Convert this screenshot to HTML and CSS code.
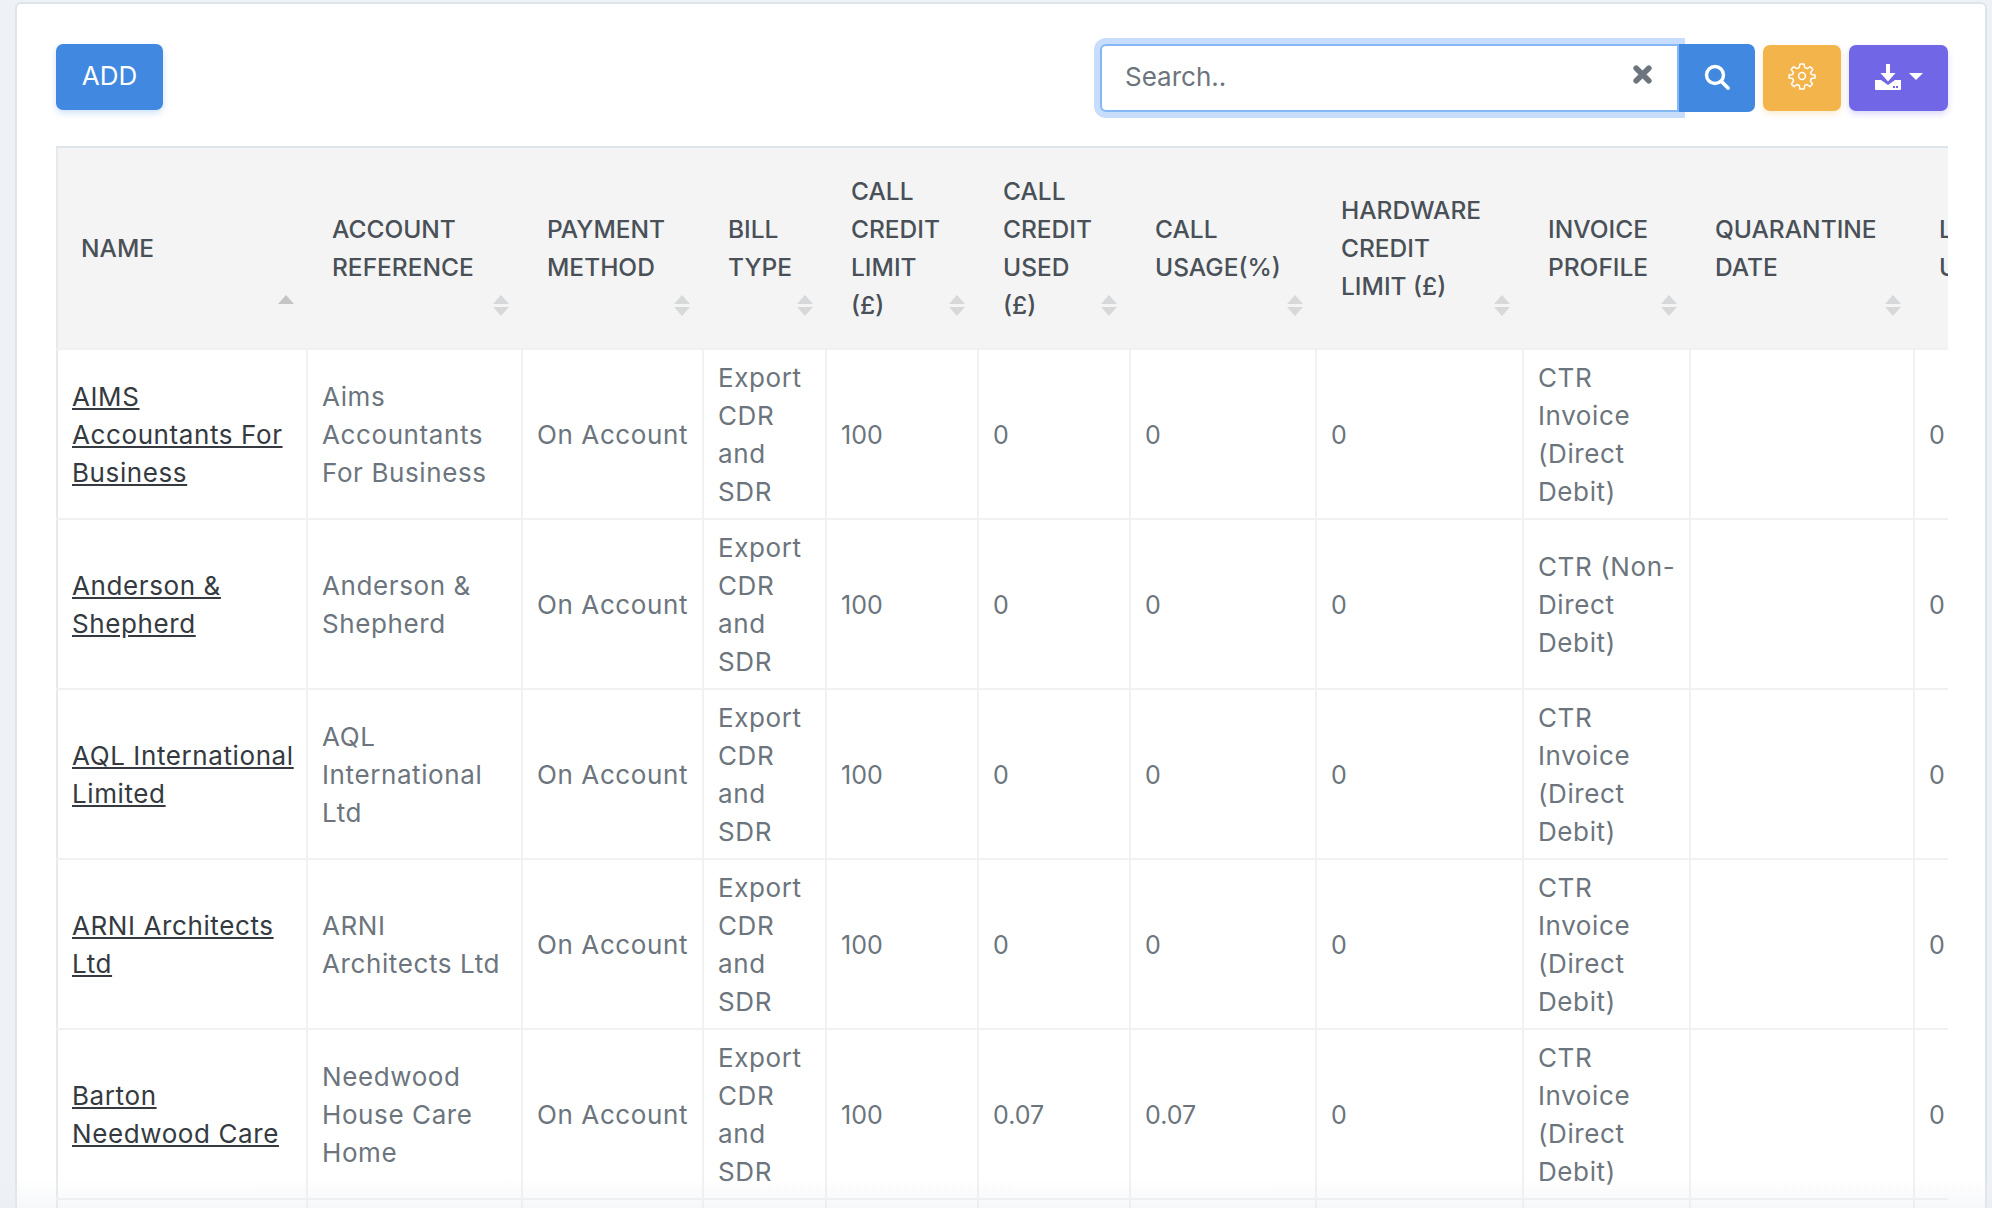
FILE: index.html
```html
<!DOCTYPE html>
<html lang="en">
  <head>
    <meta charset="UTF-8">
    <meta name="viewport" content="width=device-width, initial-scale=1.0">
    <title>Accounts</title>
    <link rel="stylesheet" href="styles.css">
  </head>
  <body>
    <div class="card">
      <div class="toolbar">
        <button class="btn btn-add">ADD</button>
        <div class="tools">
          <div class="search">
            <span class="search-text">Search..</span>
            <svg class="search-clear" viewBox="0 0 20 20"><path d="M4 4 L16 16 M16 4 L4 16" stroke="#6c757d" stroke-width="5.4" stroke-linecap="round"/></svg>
          </div>
          <button class="btn btn-search">
            <svg viewBox="0 0 28 28" width="28" height="28"><circle cx="12" cy="12" r="8.5" fill="none" stroke="#fff" stroke-width="3.4"/><path d="M18.5 18.5 L25 25" stroke="#fff" stroke-width="3.8" stroke-linecap="round"/></svg>
          </button>
          <button class="btn btn-gear">
            <svg viewBox="0 0 28 28" width="28" height="28" fill="none" stroke="#fff" stroke-width="1.5" stroke-linejoin="round"><circle cx="14" cy="14" r="3.4"/><path d="M12 2 H16 L16.8 5.6 L19.2 6.6 L22.4 4.7 L24.9 7.6 L22.6 10.4 L23.3 12.6 L27 13 V16 L23.3 16.6 L22.4 19 L24.6 22 L21.9 24.6 L19 22.5 L16.8 23.4 L16 27 H12 L11.2 23.4 L8.9 22.5 L6 24.6 L3.4 22 L5.6 19 L4.7 16.6 L1 16 V13 L4.7 12.6 L5.4 10.4 L3.1 7.6 L5.6 4.7 L8.8 6.6 L11.2 5.6 Z"/></svg>
          </button>
          <button class="btn btn-export">
            <svg viewBox="0 0 28 28" width="28" height="28"><path d="M12 1 H16 V10 H21.5 L14 18.5 L6.5 10 H12 Z" fill="#fff"/><path d="M1 17 H7 L14 22 L21 17 H27 V26 A1 1 0 0 1 26 27 H2 A1 1 0 0 1 1 26 Z" fill="#fff"/><rect x="19" y="23" width="2" height="2" fill="#7066e6"/><rect x="22" y="23" width="2" height="2" fill="#7066e6"/></svg>
            <span class="caret"></span>
          </button>
        </div>
      </div>

      <div class="table-wrap">
        <table class="accounts">
          <colgroup>
            <col class="c1"><col class="c2"><col class="c3"><col class="c4"><col class="c5"><col class="c6"><col class="c7"><col class="c8"><col class="c9"><col class="c10"><col class="c11">
          </colgroup>
          <thead>
            <tr>
              <th class="sort-asc">NAME</th>
              <th class="sort">ACCOUNT<br>REFERENCE</th>
              <th class="sort">PAYMENT<br>METHOD</th>
              <th class="sort">BILL<br>TYPE</th>
              <th class="sort">CALL<br>CREDIT<br>LIMIT<br>(£)</th>
              <th class="sort">CALL<br>CREDIT<br>USED<br>(£)</th>
              <th class="sort">CALL<br>USAGE(%)</th>
              <th class="sort">HARDWARE<br>CREDIT<br>LIMIT (£)</th>
              <th class="sort">INVOICE<br>PROFILE</th>
              <th class="sort">QUARANTINE<br>DATE</th>
              <th>LAST<br>USED</th>
            </tr>
          </thead>
          <tbody>
            <tr>
              <td class="name"><a href="#">AIMS <br>Accountants For <br>Business</a></td>
              <td>Aims<br>Accountants<br>For Business</td>
              <td>On Account</td>
              <td>Export<br>CDR<br>and<br>SDR</td>
              <td class="num">100</td><td class="num">0</td><td class="num">0</td><td class="num">0</td>
              <td>CTR<br>Invoice<br>(Direct<br>Debit)</td>
              <td></td><td class="num">0</td>
            </tr>
            <tr>
              <td class="name"><a href="#">Anderson &amp; <br>Shepherd</a></td>
              <td>Anderson &amp;<br>Shepherd</td>
              <td>On Account</td>
              <td>Export<br>CDR<br>and<br>SDR</td>
              <td class="num">100</td><td class="num">0</td><td class="num">0</td><td class="num">0</td>
              <td>CTR (Non-<br>Direct<br>Debit)</td>
              <td></td><td class="num">0</td>
            </tr>
            <tr>
              <td class="name"><a href="#">AQL International <br>Limited</a></td>
              <td>AQL<br>International<br>Ltd</td>
              <td>On Account</td>
              <td>Export<br>CDR<br>and<br>SDR</td>
              <td class="num">100</td><td class="num">0</td><td class="num">0</td><td class="num">0</td>
              <td>CTR<br>Invoice<br>(Direct<br>Debit)</td>
              <td></td><td class="num">0</td>
            </tr>
            <tr>
              <td class="name"><a href="#">ARNI Architects <br>Ltd</a></td>
              <td>ARNI<br>Architects Ltd</td>
              <td>On Account</td>
              <td>Export<br>CDR<br>and<br>SDR</td>
              <td class="num">100</td><td class="num">0</td><td class="num">0</td><td class="num">0</td>
              <td>CTR<br>Invoice<br>(Direct<br>Debit)</td>
              <td></td><td class="num">0</td>
            </tr>
            <tr>
              <td class="name"><a href="#">Barton <br>Needwood Care</a></td>
              <td>Needwood<br>House Care<br>Home</td>
              <td>On Account</td>
              <td>Export<br>CDR<br>and<br>SDR</td>
              <td class="num">100</td><td class="num">0.07</td><td class="num">0.07</td><td class="num">0</td>
              <td>CTR<br>Invoice<br>(Direct<br>Debit)</td>
              <td></td><td class="num">0</td>
            </tr>
            <tr class="cut-row">
              <td></td><td></td><td></td><td></td><td></td><td></td><td></td><td></td><td></td><td></td><td></td>
            </tr>
          </tbody>
        </table>
      </div>
    </div>
    <div class="bottom-fade"></div>
  </body>
</html>
```

FILE: styles.css
```css
body {
  position: relative;
  margin: 0;
  height: 1208px;
  overflow: hidden;
  background-color: #eef2f6;
  font-family: "Inter", "Open Sans", sans-serif;
  font-size: 26px;
  line-height: 38px;
  letter-spacing: 0.6px;
  color: #6c757d;
}

.card {
  margin: 2px 5px 0 15px;
  height: 1300px;
  padding: 40px 37px 0 39px;
  background-color: #fff;
  border: 2px solid #dee5ea;
  border-radius: 6px;
  box-sizing: border-box;
}

.toolbar {
  display: flex;
  justify-content: space-between;
  align-items: flex-start;
}

.tools {
  display: flex;
  align-items: center;
}

.btn {
  display: flex;
  align-items: center;
  justify-content: center;
  border: 0;
  padding: 0 0 3px;
  color: #fff;
  font-family: inherit;
  font-size: 26px;
  border-radius: 7px;
}

.btn-add {
  width: 107px;
  height: 66px;
  background-color: #4189e0;
  box-shadow: 0 3px 6px rgba(65, 137, 224, 0.25);
}

.search {
  display: flex;
  align-items: center;
  justify-content: space-between;
  width: 579px;
  height: 68px;
  padding: 0 26px 2px 23px;
  box-sizing: border-box;
  background-color: #fff;
  border: 2px solid #85b7f5;
  border-radius: 6px 0 0 6px;
  box-shadow: 0 0 0 6px #c8dcfb;
  letter-spacing: 0;
}

.search-text {
  color: #6c757d;
}

.search-clear {
  width: 21px;
  height: 21px;
  margin: -5px -2px 0 0;
}

.btn-search {
  position: relative;
  width: 76px;
  height: 68px;
  background-color: #4189e0;
  border-radius: 0 7px 7px 0;
}

.btn-gear {
  width: 78px;
  height: 66px;
  margin-left: 8px;
  padding-bottom: 4px;
  background-color: #f4b44c;
  box-shadow: 0 3px 6px rgba(244, 180, 76, 0.25);
}

.btn-export {
  width: 99px;
  height: 66px;
  margin-left: 8px;
  gap: 7px;
  background-color: #7066e6;
  box-shadow: 0 3px 6px rgba(112, 102, 230, 0.25);
}

.caret {
  width: 0;
  height: 0;
  border-left: 7px solid transparent;
  border-right: 7px solid transparent;
  border-top: 7px solid #fff;
}

.table-wrap {
  margin-top: 34px;
  overflow: hidden;
}

.accounts {
  width: 2100px;
  table-layout: fixed;
  border-collapse: collapse;
}

.c1 { width: 250px; }
.c2 { width: 215px; }
.c3 { width: 181px; }
.c4 { width: 123px; }
.c5 { width: 152px; }
.c6 { width: 152px; }
.c7 { width: 186px; }
.c8 { width: 207px; }
.c9 { width: 167px; }
.c10 { width: 224px; }
.c11 { width: 243px; }

.accounts th {
  position: relative;
  height: 202px;
  padding: 0 15px 0 25px;
  box-sizing: border-box;
  background-color: #f4f4f4;
  border-top: 2px solid #dee5ea;
  border-bottom: 2px solid #eff1f3;
  color: #495057;
  font-size: 24.5px;
  font-weight: 500;
  letter-spacing: 0;
  text-align: left;
  white-space: nowrap;
}

.accounts th:first-child {
  padding-left: 23px;
  border-left: 2px solid #e7eaec;
}

.accounts td {
  height: 170px;
  padding: 1px 14px 0;
  box-sizing: border-box;
  border: 2px solid #f0f1f3;
  white-space: nowrap;
  overflow: hidden;
}

.accounts td:first-child {
  border-left: 2px solid #e7eaec;
}

.accounts .num {
  font-size: 25px;
  letter-spacing: 0;
}

.accounts .name a {
  color: #343a40;
}

/* sort arrows */
.sort::before,
.sort::after,
.sort-asc::before {
  content: "";
  position: absolute;
  right: 13px;
  border-left: 8px solid transparent;
  border-right: 8px solid transparent;
}

.sort::before {
  top: 147px;
  border-bottom: 9px solid #d7d8d9;
}

.sort::after {
  top: 159px;
  border-top: 9px solid #d7d8d9;
}

.sort-asc::before {
  top: 147px;
  border-bottom: 9px solid #c2c4c6;
}

.bottom-fade {
  position: absolute;
  left: 0;
  right: 0;
  bottom: 0;
  height: 30px;
  background: linear-gradient(rgba(233, 236, 240, 0), rgba(233, 236, 240, 0.4));
}
```
